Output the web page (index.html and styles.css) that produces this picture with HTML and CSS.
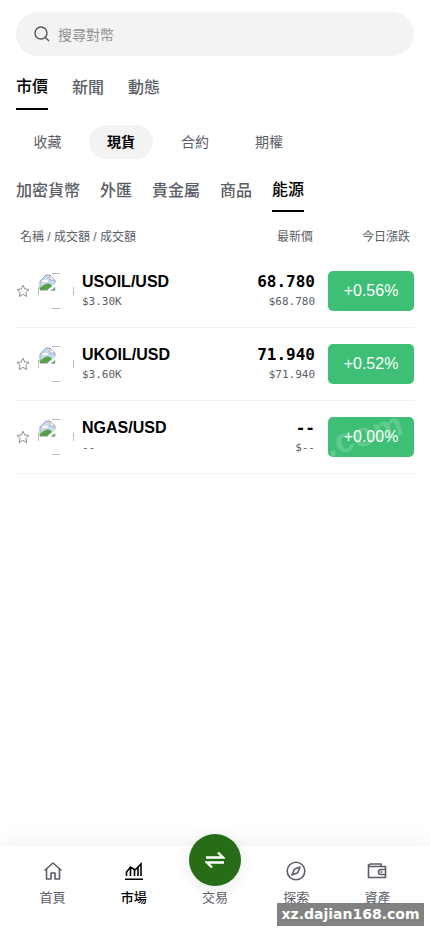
FILE: index.html
```html
<!DOCTYPE html>
<html lang="zh-Hant">
<head>
<meta charset="utf-8">
<meta name="viewport" content="width=device-width, initial-scale=1">
<title>市場</title>
<link rel="stylesheet" href="styles.css">
</head>
<body>
<svg class="defs" width="0" height="0">
  <defs>
    <symbol id="star" viewBox="0 0 14 14"><path d="M7 1.2 8.8 5l4.2.5-3.1 2.8.8 4.2L7 10.4l-3.7 2.1.8-4.2L1 5.500 5.200 5Z" fill="none" stroke="#8b8e96" stroke-linejoin="round"/></symbol>
    <symbol id="coin" viewBox="0 0 36 36">
      <path d="M14 .5h8M14 35.500h8M.5 14v8M35.500 14v8" stroke="#bcbcbc" fill="none"/>
      <path d="M2 17V8l6-6h4l5 5v5l-6 5Z" fill="#c7d9f2"/>
      <path d="M2 17V8l6-6h4l5 5v3" fill="none" stroke="#9da5b0"/>
      <path d="M12 2v5h5Z" fill="#fff" stroke="#9da5b0" stroke-width=".8"/>
      <path d="M4 9q1-3 3-2 3-1 3 2Z" fill="#fff"/>
      <path d="M2 17v-2q6-6 10-4l2 2-5 4Z" fill="#58a044"/>
      <path d="m10 17 7-6v1l-5 5Z" fill="#fff"/>
      <path d="M2 17.500h8M13 17.500h4v-3Z" fill="#58a044" stroke="#9da5b0" stroke-width=".6"/>
    </symbol>
  </defs>
</svg>
<main class="page">
  <label class="search">
    <svg width="16" height="16" viewBox="0 0 16 16" fill="none" stroke="#555" stroke-width="1.400"><circle cx="7" cy="7" r="6"/><path d="m11.400 11.400 3.600 3.600"/></svg>
    <span>搜尋對幣</span>
  </label>
  <nav class="tabs main-tabs"><a class="active">市價</a><a>新聞</a><a>動態</a></nav>
  <nav class="pills"><a>收藏</a><a class="active">現貨</a><a>合約</a><a>期權</a></nav>
  <nav class="tabs sub-tabs"><a>加密貨幣</a><a>外匯</a><a>貴金屬</a><a>商品</a><a class="active">能源</a></nav>
  <div class="head"><span>名稱 / 成交額 / 成交額</span><span class="head-price">最新價</span><span class="head-change">今日漲跌</span></div>
  <section>
    <article class="row">
      <svg class="star"><use href="#star"/></svg><svg class="coin"><use href="#coin"/></svg>
      <div class="pair"><b>USOIL/USD</b><small>$3.30K</small></div>
      <div class="price"><b>68.780</b><small>$68.780</small></div>
      <div class="change">+0.56%</div>
    </article>
    <article class="row">
      <svg class="star"><use href="#star"/></svg><svg class="coin"><use href="#coin"/></svg>
      <div class="pair"><b>UKOIL/USD</b><small>$3.60K</small></div>
      <div class="price"><b>71.940</b><small>$71.940</small></div>
      <div class="change">+0.52%</div>
    </article>
    <article class="row">
      <svg class="star"><use href="#star"/></svg><svg class="coin"><use href="#coin"/></svg>
      <div class="pair"><b>NGAS/USD</b><small>--</small></div>
      <div class="price"><b>--</b><small>$--</small></div>
      <div class="change"><span class="mark">.com</span><span class="value">+0.00%</span></div>
    </article>
  </section>
</main>
<footer class="dock">
  <a><svg width="20" height="20" viewBox="0 0 20 20" fill="none" stroke="#5b5e66" stroke-width="1.600" stroke-linejoin="round"><path d="M1.500 9.500 10 2l8.500 7.500M3.500 8v10H8v-6h4v6h4.500V8"/></svg><span>首頁</span></a>
  <a class="active"><svg width="20" height="20" viewBox="0 0 20 20" fill="none" stroke="#000" stroke-width="1.600"><path d="M1 18.200h18M2.500 15v-4l4-5 4.500 3 6-6v12M6.500 6v9M10.500 9v6M14 6v9"/></svg><span>市場</span></a>
  <a class="trade"><i class="circle"><svg width="20" height="20" viewBox="0 0 20 20" fill="none" stroke="#fff" stroke-width="2.400"><path d="M1 7.500h17l-5-5M19 12.500H2l5 5"/></svg></i><span>交易</span></a>
  <a><svg width="20" height="20" viewBox="0 0 20 20" fill="none" stroke="#5b5e66" stroke-width="1.600"><circle cx="10" cy="10" r="8.800"/><path d="m14 6-2.300 5.700L6 14l2.300-5.700Zm-4 4 .1.100" stroke-linejoin="round"/></svg><span>探索</span></a>
  <a><svg width="20" height="20" viewBox="0 0 20 20" fill="none" stroke="#5b5e66" stroke-width="1.600"><path d="M1.500 5.500h17v11h-17ZM1.500 5.500V4l2-1H14v2.500M18.500 8.500H14a2.500 2.500 0 0 0 0 5h4.500M13.500 11h2"/></svg><span>資產</span></a>
  <div class="site">xz.dajian168.com</div>
</footer>
</body>
</html>
```

FILE: styles.css
```css
* { box-sizing: border-box; }
body { margin: 0; height: 932px; display: flex; flex-direction: column; overflow: hidden; background: #fff; color: #000; font-family: "Liberation Sans", "Noto Sans CJK TC", sans-serif; }
.defs { position: absolute; }
.page { flex: 1; padding: 12px 16px 0; }
.search { height: 44px; border-radius: 22px; background: #f3f3f3; display: flex; align-items: center; gap: 8px; padding-left: 18px; font-size: 14px; color: #929292; }
.tabs { display: flex; font-size: 16px; font-weight: 500; line-height: 24px; color: #5b5e66; }
.tabs a { white-space: nowrap; }
.tabs .active { color: #000; border-bottom: 2px solid #000; }
.main-tabs { gap: 24px; height: 54px; padding-top: 20px; }
.main-tabs .active { margin-top: -1px; height: 35px; }
.pills { display: flex; gap: 10px; height: 34px; margin-top: 15px; font-size: 14px; line-height: 34px; color: #5b5e66; }
.pills a { width: 64px; flex: none; text-align: center; border-radius: 17px; }
.pills a:first-child { width: 63px; }
.pills .active { background: #f3f3f3; color: #000; font-weight: 700; }
.sub-tabs { gap: 20px; height: 53px; padding-top: 20px; }
.sub-tabs .active { margin-top: -1px; height: 34px; }
.head { display: flex; height: 39px; padding: 0 4px; align-items: center; font-size: 12px; color: #5b5e66; margin-top: 4px; }
.head-price { margin-left: auto; }
.head-change { width: 97px; text-align: right; }
.row { height: 73px; display: flex; align-items: center; border-bottom: 1px solid #f2f2f4; }
.star { width: 14px; height: 14px; margin-right: 8px; flex: none; }
.coin { width: 36px; height: 36px; margin-right: 8px; flex: none; }
.row b, .row small { display: block; }
.pair b { font-size: 16px; line-height: 22px; }
.row small { font: 11px/18px "DejaVu Sans Mono", monospace; color: #5b5e66; }
.price { margin-left: auto; text-align: right; }
.price b { font: bold 16px/22px "DejaVu Sans Mono", monospace; }
.change { position: relative; overflow: hidden; width: 86px; height: 40px; margin-left: 13px; border-radius: 5px; background: #3dbf75; color: #fff; line-height: 40px; text-align: center; font-size: 16px; }
.mark { position: absolute; left: -4px; top: -3px; font-size: 34px; font-weight: 700; color: rgba(255,255,255,.2); transform: rotate(-17deg); }
.value { position: relative; }
.dock { position: relative; height: 86px; display: flex; padding: 0 12px; background: #fff; box-shadow: 0 -4px 20px rgba(0,0,0,.06); font-size: 13px; color: #5b5e66; }
.dock a { flex: 1; display: flex; flex-direction: column; align-items: center; padding-top: 15px; }
.dock a span { line-height: 20px; margin-top: 7px; }
.dock .active { color: #000; font-weight: 500; }
.dock .trade { padding-top: 0; }
.circle { width: 52px; height: 52px; margin-top: -12px; border-radius: 50%; background: #276c16; box-shadow: 0 4px 12px 4px rgba(0,0,0,.05); display: grid; place-items: center; }
.dock .trade span { margin-top: 2px; }
.site { position: absolute; right: 6px; bottom: 6px; width: 147px; height: 23px; background: rgba(110,110,110,.86); color: #fff; font: bold 14px/23px "DejaVu Sans", sans-serif; text-align: center; }
```
